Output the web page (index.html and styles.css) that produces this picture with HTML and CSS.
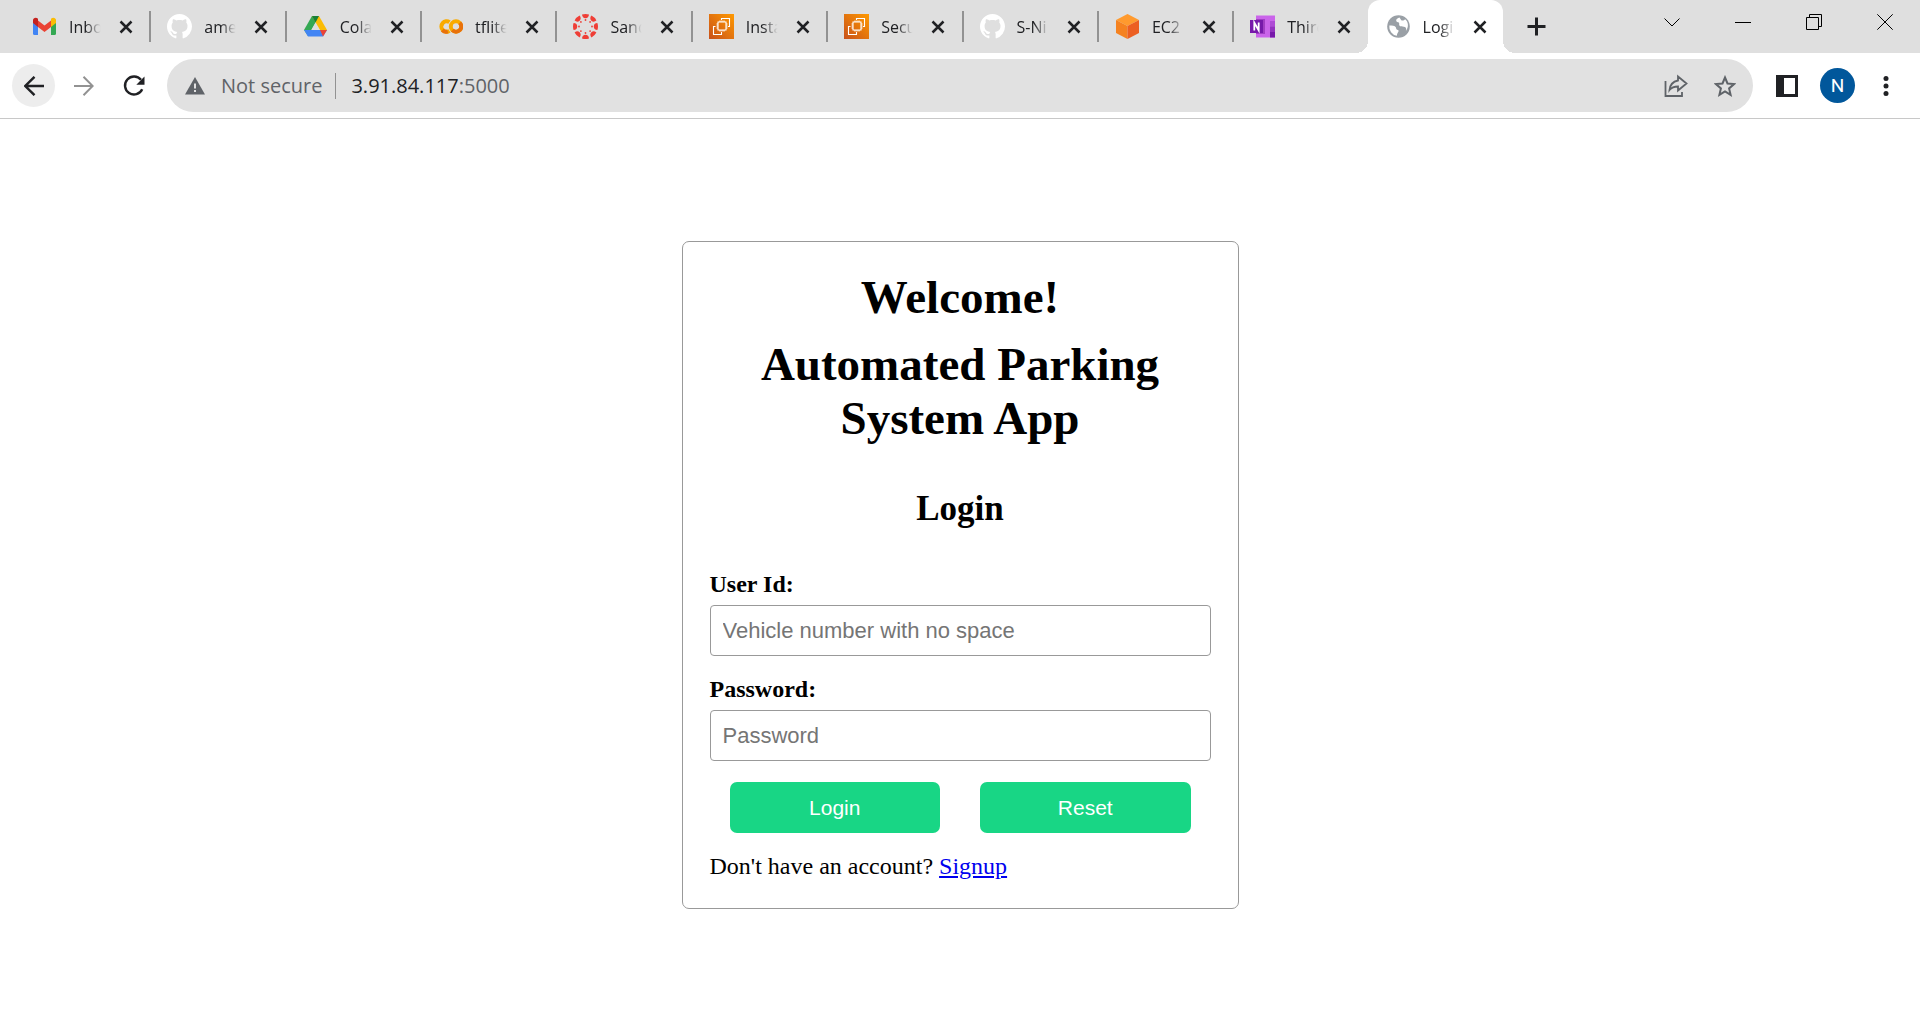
FILE: index.html
```html
<!DOCTYPE html>
<html lang="en">
<head>
<meta charset="utf-8">
<title>Login</title>
<link rel="stylesheet" href="styles.css">
</head>
<body>
<svg class="defs" width="0" height="0" aria-hidden="true">
  <defs>
    <linearGradient id="aws" x1="0" y1="1" x2="1" y2="0"><stop offset="0" stop-color="#c8511b"/><stop offset="1" stop-color="#ff9900"/></linearGradient>
    <symbol id="x" viewBox="0 0 14 14"><path d="M1.500 1.500l11 11M12.500 1.500l-11 11" stroke="#202124" stroke-width="2.500" fill="none"/></symbol>
    <symbol id="github" viewBox="0 0 16 16"><path fill="#fff" d="M8 0C3.58 0 0 3.58 0 8c0 3.54 2.29 6.53 5.47 7.59.4.07.55-.17.55-.38 0-.19-.01-.82-.01-1.49-2.01.37-2.53-.49-2.69-.94-.09-.23-.48-.94-.82-1.13-.28-.15-.68-.52-.01-.53.63-.01 1.08.58 1.23.82.72 1.21 1.87.87 2.33.66.07-.52.28-.87.51-1.07-1.78-.2-3.64-.89-3.64-3.95 0-.87.31-1.59.82-2.15-.08-.2-.36-1.02.08-2.12 0 0 .67-.21 2.2.82.64-.18 1.32-.27 2-.27s1.36.09 2 .27c1.53-1.04 2.2-.82 2.2-.82.44 1.1.16 1.92.08 2.12.51.56.82 1.27.82 2.15 0 3.07-1.87 3.75-3.65 3.95.29.25.54.73.54 1.48 0 1.07-.01 1.93-.01 2.2 0 .21.15.46.55.38A8.01 8.01 0 0 0 16 8c0-4.42-3.58-8-8-8z"/></symbol>
    <symbol id="ec2" viewBox="0 0 25 25"><path fill="url(#aws)" d="M0 0h25v25H0z"/><g fill="none" stroke="#fff" stroke-width="1.1"><path d="M9 8h8v8H9zM11 8V6.500M13 8V6.500M15 8V6.500M11 16v1.500M13 16v1.500M15 16v1.500M9 10H7.500M9 12H7.500M9 14H7.500M17 10h1.500M17 12h1.500M17 14h1.500"/><path d="M12.500 6V4.500h8v8H19M6.500 12.500h-2v8h8V18"/></g></symbol>
  </defs>
</svg>

<header class="browser">
  <div class="strip">
    <nav class="tabs" aria-label="Tabs">
      <div class="tab"><svg class="fav" viewBox="0 0 25 25"><path fill="#4285f4" d="M1 9l5 4v11.500H2.500Q1 24.500 1 23z" transform="translate(0 -3.500)"/><path fill="#34a853" d="M24 9l-5 4v11.500h3.500q1.500 0 1.500-1.500z" transform="translate(0 -3.500)"/><path fill="#ea4335" d="M6 6.500l6.500 5 6.500-5V13l-6.500 5L6 13z"/><path fill="#c5221f" d="M1 6.500C1 3.800 4 3 6 4.800V13L1 9z"/><path fill="#fbbc04" d="M24 6.500c0-2.700-3-3.500-5-1.700V13l5-4z"/></svg><span class="name">Inbo</span><button class="close" aria-label="Close tab"><svg><use href="#x"/></svg></button></div>
      <div class="tab"><svg class="fav"><use href="#github"/></svg><span class="name">ame</span><button class="close" aria-label="Close tab"><svg><use href="#x"/></svg></button></div>
      <div class="tab"><svg class="fav" viewBox="0 0 25 25"><path fill="#34a853" d="M9 2h7L5 22l-4-6z"/><path fill="#fbbc04" d="M9 2h7l8 14h-7z"/><path fill="#188038" d="M9 2h7l-3.500 6.500z"/><path fill="#4285f4" d="M1 16h23l-4 6.500H5z"/><path fill="#ea4335" d="M17 16h7l-4 6.500z"/><path fill="#dfdfdf" d="M12.500 9l4 7h-8z"/></svg><span class="name">Cola</span><button class="close" aria-label="Close tab"><svg><use href="#x"/></svg></button></div>
      <div class="tab"><svg class="fav" viewBox="0 0 25 25"><path fill="none" stroke="#f9ab00" stroke-width="4" d="M11.500 8.200a5.200 5.200 0 1 0 0 8.600"/><circle cx="18" cy="12.500" r="5.200" fill="none" stroke="#f9ab00" stroke-width="4"/><path fill="none" stroke="#e8710a" stroke-width="4" d="M14.300 16.200a5.200 5.200 0 0 0 7.400-7.400M4.300 16.200a5.200 5.200 0 0 0 5.500 1.200"/></svg><span class="name">tflite</span><button class="close" aria-label="Close tab"><svg><use href="#x"/></svg></button></div>
      <div class="tab"><svg class="fav" viewBox="0 0 25 25"><g fill="#ef3e36"><path id="petal" d="M9 .6Q12.500-.6 16 .6 15.600 4.200 12.500 4.200T9 .6z"/><use href="#petal" transform="rotate(45 12.500 12.500)"/><use href="#petal" transform="rotate(90 12.500 12.500)"/><use href="#petal" transform="rotate(135 12.500 12.500)"/><use href="#petal" transform="rotate(180 12.500 12.500)"/><use href="#petal" transform="rotate(225 12.500 12.500)"/><use href="#petal" transform="rotate(270 12.500 12.500)"/><use href="#petal" transform="rotate(315 12.500 12.500)"/><circle cx="12.500" cy="6" r=".9"/><circle cx="12.500" cy="19" r=".9"/><circle cx="6" cy="12.500" r=".9"/><circle cx="19" cy="12.500" r=".9"/><circle cx="7.900" cy="7.900" r=".9"/><circle cx="17.100" cy="7.900" r=".9"/><circle cx="7.900" cy="17.100" r=".9"/><circle cx="17.100" cy="17.100" r=".9"/></g></svg><span class="name">Sand</span><button class="close" aria-label="Close tab"><svg><use href="#x"/></svg></button></div>
      <div class="tab"><svg class="fav"><use href="#ec2"/></svg><span class="name">Insta</span><button class="close" aria-label="Close tab"><svg><use href="#x"/></svg></button></div>
      <div class="tab"><svg class="fav"><use href="#ec2"/></svg><span class="name">Secu</span><button class="close" aria-label="Close tab"><svg><use href="#x"/></svg></button></div>
      <div class="tab"><svg class="fav"><use href="#github"/></svg><span class="name">S-Ni</span><button class="close" aria-label="Close tab"><svg><use href="#x"/></svg></button></div>
      <div class="tab"><svg class="fav" viewBox="0 0 25 25"><path fill="#ff9a2e" d="M12.500 0L24 6l-11.500 6L1 6z"/><path fill="#f58220" d="M1 6l11.500 6v13L1 19z"/><path fill="#ec5f22" d="M24 6l-11.500 6v13L24 19z"/></svg><span class="name">EC2</span><button class="close" aria-label="Close tab"><svg><use href="#x"/></svg></button></div>
      <div class="tab"><svg class="fav" viewBox="0 0 25 25"><path fill="#ca64ea" d="M6 1.500h19v22H6z"/><path fill="#ae4bd5" d="M20 7h5v5.500h-5z"/><path fill="#9332bf" d="M20 12.500h5V18h-5z"/><path fill="#7719aa" d="M20 18h5v5.500h-5z"/><path fill="#a13ec4" d="M6 5h9v15H6z"/><path fill="#7719aa" d="M0 6h13v13H0z"/><path fill="none" stroke="#fff" stroke-width="1.800" d="M4.300 16.500V8.700l4.400 7.600V8.500"/></svg><span class="name">Third</span><button class="close" aria-label="Close tab"><svg><use href="#x"/></svg></button></div>
      <div class="tab active"><svg class="fav" viewBox="0 0 25 25"><circle cx="12.500" cy="12.500" r="11.300" fill="#9aa0a6"/><path fill="#fff" d="M3.300 11.500c2.700 0 5.700.2 6.500 1.700.5 1 .2 2.500 2 2.700 1.200.1.900 1.600.1 2.600-.7.900-1 2-1 3.300A9.400 9.400 0 0 1 3.300 11.500zM13.500 3.500c-1.700.7-3.500 1.500-3.300 3.200.2 1.500 1.700 1.200 2.600 1.900 1 .9-.4 2.400 1 3.400 1.800 1.100 3.600.2 5.200 1 1.300.7 1.500 2.300.8 4.300 3.300-4.500 2.600-9.500-.7-12-.8 1.200-2.800 1.700-3.800 1z"/></svg><span class="name">Logi</span><button class="close" aria-label="Close tab"><svg><use href="#x"/></svg></button></div>
    </nav>
    <button class="newtab" aria-label="New tab"><svg width="19" height="19" viewBox="0 0 19 19"><path d="M9.500.5v18M.5 9.500h18" stroke="#202124" stroke-width="3" fill="none"/></svg></button>
    <div class="window">
      <button aria-label="Search tabs"><svg width="16" height="16" viewBox="0 0 16 16"><path d="M.5 4.500L8 12l7.500-7.500"/></svg></button>
      <button aria-label="Minimize"><svg width="16" height="16" viewBox="0 0 16 16"><path d="M0 8.500h16"/></svg></button>
      <button aria-label="Restore"><svg width="16" height="16" viewBox="0 0 16 16"><path d="M.5 3.500h12v12H.5zM3.500 3.500v-3h12v12h-3"/></svg></button>
      <button aria-label="Close"><svg width="16" height="16" viewBox="0 0 16 16"><path d="M.3.3l15.400 15.400M15.700.3L.3 15.700"/></svg></button>
    </div>
  </div>

  <div class="toolbar">
    <button class="nav back" aria-label="Back"><svg width="20" height="20" viewBox="0 0 20 20" fill="none" stroke="#202124" stroke-width="2.400"><path d="M20 10H2M10.500.8L1.300 10l9.200 9.200"/></svg></button>
    <button class="nav" aria-label="Forward"><svg width="20" height="20" viewBox="0 0 20 20" fill="none" stroke="#929292" stroke-width="2"><path d="M0 10h18M9.500.8l9.200 9.200-9.200 9.200"/></svg></button>
    <button class="nav" aria-label="Reload"><svg width="22" height="22" viewBox="0 0 22 22"><path fill="none" stroke="#202124" stroke-width="2.400" d="M18 4.800a9 9 0 1 0 1.200 9.500"/><path fill="#202124" d="M21.500 1.500v8.200h-8.200z"/></svg></button>
    <div class="omnibox">
      <svg width="20" height="18" viewBox="0 0 20 18"><path fill="#5f6368" d="M10 0l10 17.500H0z"/><path fill="#e1e1e1" d="M9 6.500h2v5H9zM9 13h2v2H9z"/></svg>
      <span class="secure">Not secure</span>
      <div class="address" role="textbox" aria-label="Address" contenteditable="true" spellcheck="false">3.91.84.117<span class="port">:5000</span></div>
      <button aria-label="Share"><svg width="24" height="24" viewBox="0 0 24 24" fill="none" stroke="#5f6368" stroke-width="1.800"><path d="M1.500 7v15H18v-4M14 2.500l8.500 7-8.500 7v-4c-4 0-6.500 1-8.500 3.500.5-5 3.500-8.500 8.500-9.500z"/></svg></button>
      <button aria-label="Bookmark"><svg width="22" height="22" viewBox="0 0 22 22" fill="none" stroke="#5f6368" stroke-width="2"><path d="M11 2.500l2.500 6 6.500.6-4.900 4.300 1.500 6.400L11 16.400l-5.600 3.400 1.500-6.400L2 9.100l6.500-.6z"/></svg></button>
    </div>
    <button class="panel" aria-label="Side panel"><svg width="22" height="22" viewBox="0 0 22 22"><path fill="#202124" d="M0 0h22v22H0z"/><path fill="#fff" d="M8 3h11v16H8z"/></svg></button>
    <button class="avatar" aria-label="Profile">N</button>
    <button class="menu" aria-label="Menu"><svg width="6" height="22" viewBox="0 0 6 22" fill="#202124"><circle cx="3" cy="3.500" r="2.500"/><circle cx="3" cy="11" r="2.500"/><circle cx="3" cy="18.500" r="2.500"/></svg></button>
  </div>
</header>

<main class="page">
  <form class="card" onsubmit="return false">
    <h1>Welcome!</h1>
    <h1>Automated Parking System App</h1>
    <h2>Login</h2>
    <label for="user">User Id:</label>
    <input id="user" type="text" placeholder="Vehicle number with no space">
    <label for="password">Password:</label>
    <input id="password" type="password" placeholder="Password">
    <div class="actions">
      <button type="submit">Login</button>
      <button type="reset">Reset</button>
    </div>
    <p>Don't have an account? <a href="#signup">Signup</a></p>
  </form>
</main>
</body>
</html>
```
FILE: styles.css
```css
* { box-sizing: border-box; }

body {
  margin: 0;
  background: #fff;
  color: #000;
  font-family: "Liberation Serif", "Times New Roman", serif;
}

button {
  margin: 0;
  padding: 0;
  border: 0;
  background: none;
  font: inherit;
}

svg { display: block; flex: none; }
.defs { position: absolute; }

/* Browser frame */
.browser {
  border-bottom: 1px solid #c8c8c8;
  font-family: "Open Sans", "Noto Sans", sans-serif;
}

.strip {
  display: flex;
  height: 53px;
  padding-left: 14px;
  background: #dfdfdf;
}

.tabs {
  display: flex;
  flex: 0 1 1489px;
  min-width: 0;
}

.tab {
  position: relative;
  display: flex;
  flex: 1 1 0;
  align-items: center;
  min-width: 0;
  padding-left: 18px;
}

.tab + .tab:not(.active)::before {
  content: "";
  position: absolute;
  left: 0;
  top: 11px;
  width: 2px;
  height: 31px;
  background: #929292;
}

.tab.active {
  background: #fff;
  border-radius: 12px 12px 0 0;
}

.tab.active::before,
.tab.active::after {
  content: "";
  position: absolute;
  bottom: 0;
  width: 12px;
  height: 12px;
}

.tab.active::before {
  right: 100%;
  background: radial-gradient(circle at 0 0, #dfdfdf 12px, #fff 12px);
}

.tab.active::after {
  left: 100%;
  background: radial-gradient(circle at 100% 0, #dfdfdf 12px, #fff 12px);
}

.fav { width: 25px; height: 25px; }

.name {
  width: 33px;
  margin-left: 12px;
  overflow: hidden;
  white-space: nowrap;
  font-size: 16px;
  font-weight: 400;
  line-height: 24px;
  color: #202124;
  -webkit-mask-image: linear-gradient(to right, #000 50%, transparent 96%);
  mask-image: linear-gradient(to right, #000 50%, transparent 96%);
}

.close { margin-left: 17px; }
.close svg { width: 14px; height: 14px; }

.newtab { margin-left: 24px; }

.window {
  display: flex;
  gap: 55px;
  height: 44px;
  margin-left: auto;
  padding-right: 27px;
}

.window svg { fill: none; stroke: #000; stroke-width: 1; }

.toolbar {
  display: flex;
  align-items: center;
  height: 65px;
  padding: 0 31px 0 12px;
}

.nav {
  display: flex;
  align-items: center;
  justify-content: center;
  width: 43px;
  height: 43px;
  margin-right: 7px;
  border-radius: 50%;
}

.back { background: #ededed; }

.omnibox {
  display: flex;
  flex: 1;
  align-items: center;
  height: 53px;
  margin-left: 5px;
  padding: 0 17px 0 18px;
  border-radius: 27px;
  background: #e1e1e1;
  font-size: 20px;
  line-height: 26px;
  color: #202124;
}

.omnibox button { margin-left: 26px; }

.secure {
  margin-left: 16px;
  padding-right: 13px;
  border-right: 1px solid #929292;
  color: #5f6368;
}

.address {
  flex: 1;
  padding-left: 15px;
  outline: none;
}

.port { color: #5f6368; }

.panel { margin-left: 23px; }

.avatar {
  width: 35px;
  height: 35px;
  margin: 0 28px 0 22px;
  border-radius: 50%;
  background: #01579b;
  color: #fff;
  font-family: Roboto, sans-serif;
  font-size: 19px;
}

/* Login page */
.page {
  display: flex;
  justify-content: center;
  padding: 122px 20px 40px;
}

.card {
  width: 557px;
  padding: 28px 27px;
  border: 1px solid #999;
  border-radius: 7px;
  font-size: 24px;
  line-height: 27px;
}

h1,
h2 {
  margin: 0 0 13px;
  font-size: 47px;
  line-height: 54px;
  text-align: center;
}

h2 {
  margin: 44px 0 42px;
  font-size: 35px;
  line-height: 40px;
}

label {
  display: block;
  font-weight: bold;
}

.card input {
  display: block;
  width: 100%;
  height: 51px;
  margin: 7px 0 20px;
  padding: 0 12px;
  border: 1px solid #999;
  border-radius: 4px;
  background: #fff;
  font-family: "Liberation Sans", Arial, sans-serif;
  font-size: 22px;
}

.card input::placeholder { color: #757575; }

.actions {
  display: flex;
  gap: 40px;
  padding: 1px 20px 0;
}

.actions button {
  flex: 1;
  height: 51px;
  border-radius: 7px;
  background: #18d685;
  color: #fff;
  font-family: "Liberation Sans", Arial, sans-serif;
  font-size: 21px;
}

.card p { margin: 20px 0 0; }
.card a { color: #00e; }
```
